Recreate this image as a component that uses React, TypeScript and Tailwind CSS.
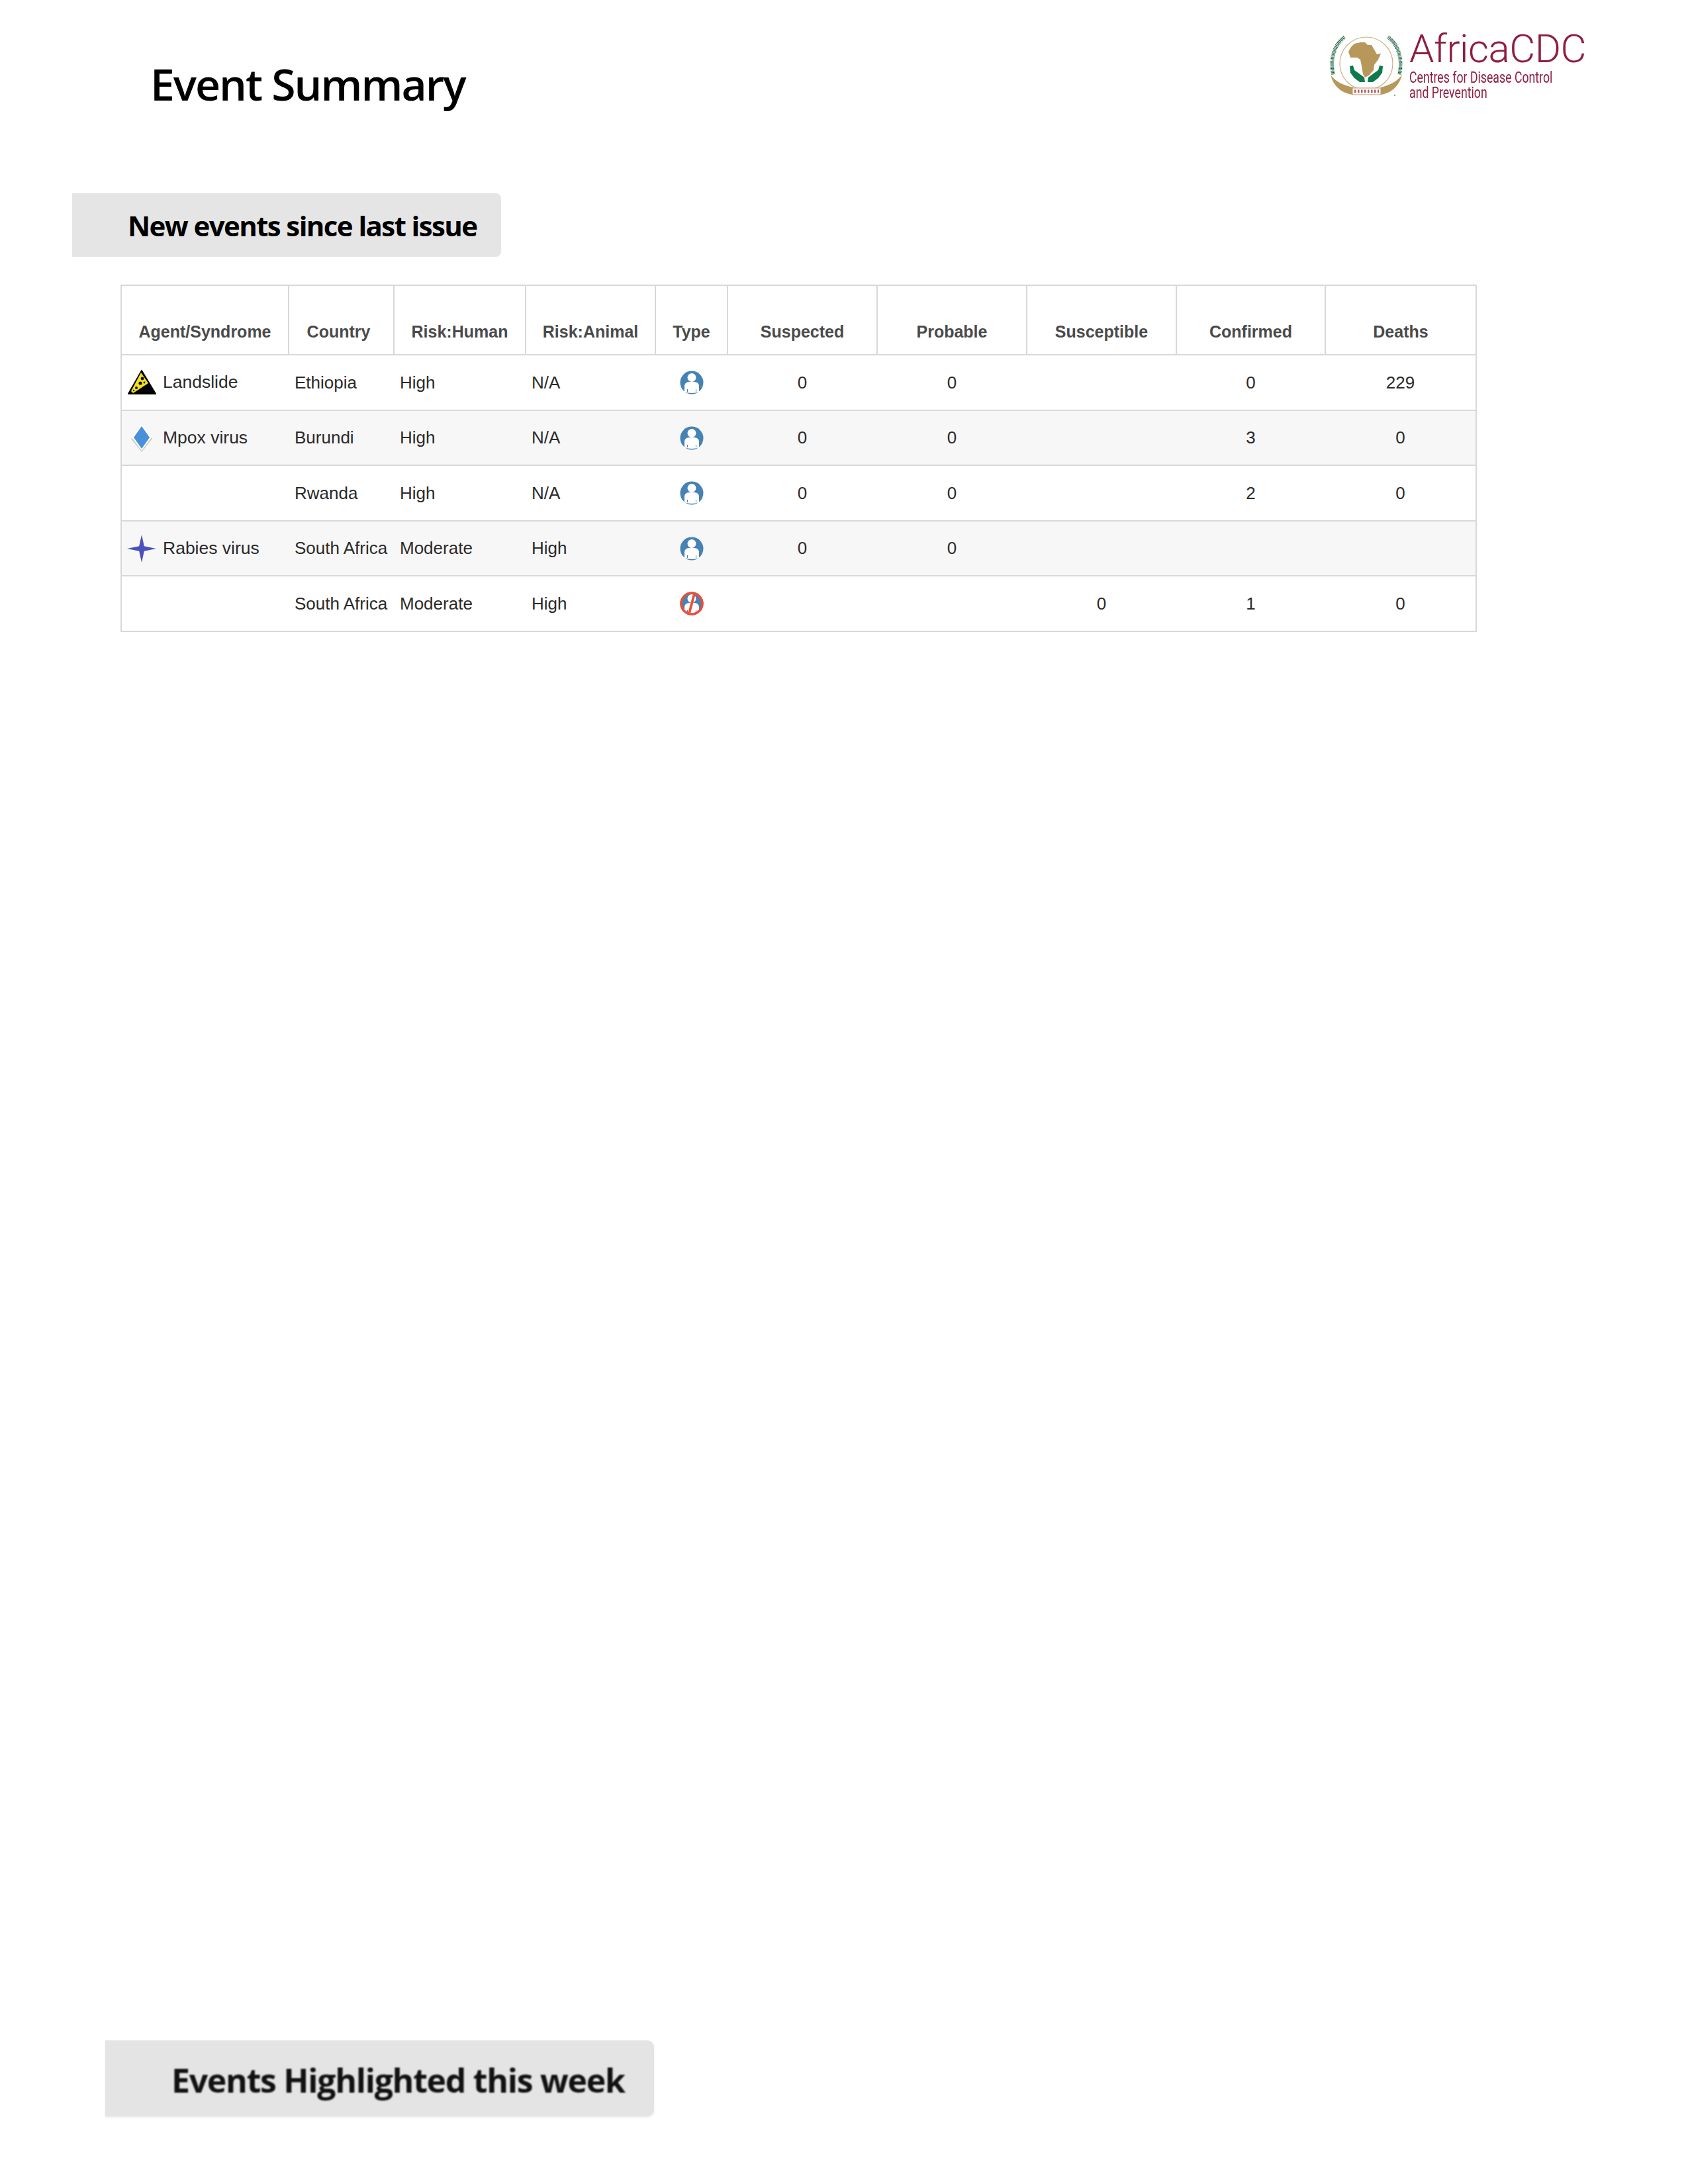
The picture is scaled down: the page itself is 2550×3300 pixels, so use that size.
import React from 'react';

interface EventRow {
  icon?: 'landslide' | 'diamond' | 'star';
  agent?: string;
  country: string;
  human: string;
  animal: string;
  type: 'human' | 'animal';
  suspected?: string;
  probable?: string;
  susceptible?: string;
  confirmed?: string;
  deaths?: string;
}

const rows: EventRow[] = [
  { icon: 'landslide', agent: 'Landslide', country: 'Ethiopia', human: 'High', animal: 'N/A', type: 'human', suspected: '0', probable: '0', confirmed: '0', deaths: '229' },
  { icon: 'diamond', agent: 'Mpox virus', country: 'Burundi', human: 'High', animal: 'N/A', type: 'human', suspected: '0', probable: '0', confirmed: '3', deaths: '0' },
  { country: 'Rwanda', human: 'High', animal: 'N/A', type: 'human', suspected: '0', probable: '0', confirmed: '2', deaths: '0' },
  { icon: 'star', agent: 'Rabies virus', country: 'South Africa', human: 'Moderate', animal: 'High', type: 'human', suspected: '0', probable: '0' },
  { country: 'South Africa', human: 'Moderate', animal: 'High', type: 'animal', susceptible: '0', confirmed: '1', deaths: '0' },
];

const headers = ['Agent/Syndrome', 'Country', 'Risk:Human', 'Risk:Animal', 'Type', 'Suspected', 'Probable', 'Susceptible', 'Confirmed', 'Deaths'];

function AgentIcon({ kind }: { kind: EventRow['icon'] }) {
  if (kind === 'landslide') {
    return (
      <svg width="46" height="42" viewBox="0 0 46 42">
        <path d="M23 3 L44 38 L3 38 Z" fill="#000" stroke="#000" strokeWidth="2" strokeLinejoin="round" />
        <path d="M22 6 L33 22 L10 37 L7 34 Z" fill="#f4e01e" />
        <circle cx="24" cy="15" r="2.4" fill="#111" />
        <circle cx="21" cy="22" r="2.6" fill="#111" />
        <circle cx="15" cy="29" r="2" fill="#111" />
        <circle cx="27" cy="21" r="1.4" fill="#111" />
        <circle cx="11" cy="33" r="1.2" fill="#111" />
      </svg>
    );
  }
  if (kind === 'diamond') {
    return (
      <svg width="46" height="46" viewBox="0 0 46 46">
        <path d="M23 5 L39 24 L23 44 L7 24 Z" fill="#c9c9c9" />
        <path d="M23 2 L38 22 L23 42 L8 22 Z" fill="#fff" />
        <path d="M23 5 L35 22 L23 39 L11 22 Z" fill="#4a90d9" />
      </svg>
    );
  }
  return (
    <svg width="48" height="46" viewBox="0 0 46 46">
      <path d="M23 2 L26.8 19.2 L45 23 L26.8 26.8 L23 44 L19.2 26.8 L1 23 L19.2 19.2 Z" fill="#4b50bb" />
    </svg>
  );
}

function TypeIcon({ type }: { type: EventRow['type'] }) {
  return (
    <svg width="38" height="38" viewBox="0 0 38 38" className="mx-auto block">
      <circle cx="19" cy="19" r="17.5" fill="#4682b4" />
      <circle cx="19" cy="11.5" r="6.5" fill="#fff" />
      <path d="M8 33 L8 24 Q8.5 18.5 15 18 L23 18 Q29.5 18.5 30 24 L30 33 Q19 37 8 33 Z" fill="#fff" />
      <path d="M12.5 29 L12.5 33 M25.5 29 L25.5 33" stroke="#4682b4" strokeWidth="1" />
      {type === 'animal' && (
        <>
          <circle cx="19" cy="19" r="16" fill="none" stroke="#e8503a" strokeWidth="3.6" />
          <path d="M23 4 L15 34" stroke="#e8503a" strokeWidth="3.8" />
        </>
      )}
    </svg>
  );
}

function Branch() {
  return (
    <>
      <path d="M31 16 C15 28 9 50 14 73" fill="none" stroke="#0f5c38" strokeWidth="5.5" strokeDasharray="1.1 1" />
      <path d="M31 16 C15 28 9 50 14 73" fill="none" stroke="#6fa386" strokeWidth="0.8" />
    </>
  );
}

function Emblem() {
  return (
    <svg width="130" height="120" viewBox="0 0 130 120" className="shrink-0">
      <circle cx="64" cy="56" r="40" fill="none" stroke="#c9b27c" strokeWidth="1.2" />
      <Branch />
      <g transform="matrix(-1 0 0 1 128 0)">
        <Branch />
      </g>
      <path d="M46 26 L55 24 L62 24 L66 28 L72 28 L76 35 L80 42 L86 41 L82 50 L76 58 L75 66 L68 74 L62 77 L59 72 L57 60 L55 50 L50 47 L40 47 L37 38 L41 31 Z" fill="#b8975a" />
      <path d="M39 60 L44 59 L46 66 L53 71 L61 77 L62 84 L54 84 L46 78 L40 70 Z" fill="#0d7a4c" />
      <path d="M89 60 L84 59 L82 66 L75 71 L67 77 L66 84 L74 84 L82 78 L88 70 Z" fill="#0d7a4c" />
      <path d="M10 73 C18 84 30 89 44 92 L43 103 C28 101 15 92 10 73 Z" fill="#b8975a" />
      <path d="M118 73 C110 84 98 89 86 92 L86 103 C100 101 113 92 118 73 Z" fill="#b8975a" />
      <rect x="43" y="93" width="43" height="10" fill="#fff" stroke="#b8975a" strokeWidth="1" />
      <path d="M46 98 L83 98" stroke="#8f1d3f" strokeWidth="5" strokeDasharray="2.5 2.5" opacity="0.7" />
      <circle cx="107" cy="104" r="1.2" fill="#999" />
    </svg>
  );
}

export default function App() {
  return (
    <div className="w-[2550px] h-[3300px] bg-white flex flex-col font-['Liberation_Sans',sans-serif]">
      <header className="flex items-start justify-between h-[292px] shrink-0">
        <h1 className="ml-[227px] mt-[83px] text-[66px] leading-[86px] font-semibold text-black font-['Open_Sans',sans-serif] tracking-[-2px]">
          Event Summary
        </h1>
        <div className="flex mr-[158px] mt-[40px]">
          <Emblem />
          <div className="ml-[-1px] w-[263px] flex flex-col text-[#8f1d3f]">
            <span className="text-[60px] leading-[60px] mt-[4px] font-light font-['Roboto',sans-serif] tracking-[-0.5px]">AfricaCDC</span>
            <span className="text-[23px] leading-[23px] mt-[2px] origin-left scale-x-[0.77] whitespace-nowrap font-['Roboto',sans-serif]">Centres for Disease Control</span>
            <span className="text-[23px] leading-[23px] origin-left scale-x-[0.77] whitespace-nowrap font-['Roboto',sans-serif]">and Prevention</span>
          </div>
        </div>
      </header>

      <div className="w-[648px] h-[96px] ml-[109px] bg-[#e5e5e5] rounded-r-[8px] flex items-center pl-[84px] shrink-0">
        <h2 className="text-[42px] font-bold text-black font-['Open_Sans',sans-serif] tracking-[-1.6px] whitespace-nowrap">New events since last issue</h2>
      </div>

      <table className="ml-[182px] mt-[42px] w-[2047px] table-fixed border-collapse border-2 border-[#d8d8d8] text-[26px] text-[#2a2a2a]">
        <colgroup>
          <col className="w-[253px]" />
          <col className="w-[159px]" />
          <col className="w-[199px]" />
          <col className="w-[196px]" />
          <col className="w-[109px]" />
          <col className="w-[226px]" />
          <col className="w-[226px]" />
          <col className="w-[226px]" />
          <col className="w-[225px]" />
          <col className="w-[228px]" />
        </colgroup>
        <thead>
          <tr className="h-[105px]">
            {headers.map((h) => (
              <th key={h} className={`border-2 border-[#d8d8d8] align-bottom pb-[15px] text-center text-[25px] font-bold text-[#4a4a4a] whitespace-nowrap ${h === 'Country' ? 'pr-[8px]' : 'px-0'}`}>
                {h}
              </th>
            ))}
          </tr>
        </thead>
        <tbody>
          {rows.map((r, i) => (
            <tr key={i} className={`border-b-2 border-[#d8d8d8] ${i % 2 === 1 ? 'bg-[#f7f7f7] h-[83px]' : 'bg-white h-[84px]'}`}>
              <td className="p-0">
                <div className="flex items-center">
                  <div className="w-[60px] mr-[2px] flex justify-center">{r.icon && <AgentIcon kind={r.icon} />}</div>
                  <span className="text-[26.5px]">{r.agent}</span>
                </div>
              </td>
              <td className="pl-[9px] whitespace-nowrap">{r.country}</td>
              <td className="pl-[9px]">{r.human}</td>
              <td className="pl-[9px]">{r.animal}</td>
              <td><TypeIcon type={r.type} /></td>
              <td className="text-center">{r.suspected}</td>
              <td className="text-center">{r.probable}</td>
              <td className="text-center">{r.susceptible}</td>
              <td className="text-center">{r.confirmed}</td>
              <td className="text-center">{r.deaths}</td>
            </tr>
          ))}
        </tbody>
      </table>

      <div className="mt-auto mb-[102px] ml-[159px] w-[829px] h-[115px] bg-[#e4e4e4] rounded-r-[10px] flex items-center pl-[100px] pt-[5px] shrink-0 shadow-[0_2px_4px_rgba(0,0,0,0.06)]">
        <h2 className="text-[50px] font-bold text-[#111] blur-[1px] font-['Open_Sans',sans-serif] tracking-[-1.3px] whitespace-nowrap">Events Highlighted this week</h2>
      </div>
    </div>
  );
}
